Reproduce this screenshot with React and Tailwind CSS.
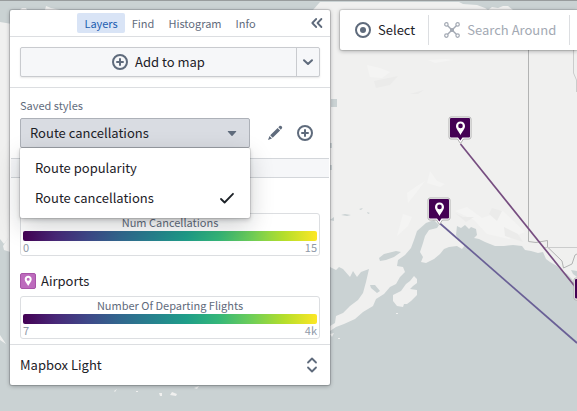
import { useState } from 'react'

const savedStyles = ['Route popularity', 'Route cancellations']
const tabs = ['Layers', 'Find', 'Histogram', 'Info']

const airports = [
  { x: 460, y: 128 },
  { x: 439, y: 209 },
  { x: 585, y: 289 },
]

function AddIcon() {
  return (
    <svg width="16" height="16" viewBox="0 0 16 16" fill="none" stroke="#5f6b7c" strokeWidth="2" aria-hidden="true">
      <circle cx="8" cy="8" r="7" />
      <path d="M8 5v6M5 8h6" strokeLinecap="round" />
    </svg>
  )
}

function CollapseIcon() {
  return (
    <svg width="16" height="16" viewBox="0 0 16 16" fill="none" stroke="#5f6b7c" strokeWidth="1.8" strokeLinecap="round" strokeLinejoin="round" aria-hidden="true">
      <path d="M7.2 4 3.3 8l3.9 4M12.4 4 8.5 8l3.9 4" />
    </svg>
  )
}

function ChevronDownIcon() {
  return (
    <svg width="16" height="16" viewBox="0 0 16 16" fill="none" stroke="#5f6b7c" strokeWidth="2" strokeLinecap="round" strokeLinejoin="round" aria-hidden="true">
      <path d="m4 6.2 4 3.8 4-3.8" />
    </svg>
  )
}

function CaretDownIcon() {
  return (
    <svg width="16" height="16" viewBox="0 0 16 16" fill="#5f6b7c" aria-hidden="true">
      <path d="M4.3 5.9h7.4c.5 0 .7.5.4.9l-3.6 3.9c-.3.3-.7.3-1 0L3.9 6.8c-.3-.4-.1-.9.4-.9Z" />
    </svg>
  )
}

function EditIcon() {
  return (
    <svg width="16" height="16" viewBox="0 0 16 16" fill="#5f6b7c" aria-hidden="true">
      <path d="M3.2 10.2 10.6 2.9l2.500 2.500-7.400 7.300ZM11.300 2.200l1-1c.3-.3.7-.4 1-.4 1 0 1.900.9 1.900 1.800 0 .4-.1.7-.4 1l-1 1.100ZM1 15l1.500-4 2.500 2.500Z" />
    </svg>
  )
}

function TickIcon() {
  return (
    <svg width="16" height="16" viewBox="0 0 16 16" fill="none" stroke="#1c2127" strokeWidth="1.8" strokeLinecap="round" strokeLinejoin="round" aria-hidden="true">
      <path d="m2 9 3.600 3.500L14 3.800" />
    </svg>
  )
}

function ExpandIcon() {
  return (
    <svg width="16" height="16" viewBox="0 0 16 16" fill="none" stroke="#5f6b7c" strokeWidth="1.8" strokeLinecap="round" strokeLinejoin="round" aria-hidden="true">
      <path d="m4 5.500 4-4 4 4M4 10.500l4 4 4-4" />
    </svg>
  )
}

function SelectIcon() {
  return (
    <svg width="16" height="16" viewBox="0 0 16 16" fill="none" aria-hidden="true">
      <circle cx="8" cy="8" r="7" stroke="#5f6b7c" strokeWidth="2" />
      <circle cx="8" cy="8" r="3" fill="#5f6b7c" />
    </svg>
  )
}

function GraphIcon() {
  return (
    <svg width="16" height="16" viewBox="0 0 16 16" fill="none" stroke="#a3a9b3" strokeWidth="1.2" aria-hidden="true">
      <path d="m3.700 3.700 8.600 8.600M12.300 3.700l-8.600 8.600" strokeWidth="1.4" />
      <circle cx="8" cy="8" r="1.5" fill="#a3a9b3" />
      <circle cx="2.4" cy="2.4" r="1.7" />
      <circle cx="13.6" cy="2.4" r="1.7" />
      <circle cx="2.4" cy="13.6" r="1.7" />
      <circle cx="13.6" cy="13.6" r="1.7" />
    </svg>
  )
}

function AirportIcon() {
  return (
    <svg width="16" height="16" viewBox="0 0 16 16" aria-hidden="true">
      <rect x="0.5" y="0.5" width="15" height="15" rx="1.5" fill="#bd6bbd" stroke="#a854a8" />
      <path fillRule="evenodd" fill="#fff" d="M8.200 2.800c-2 0-3.500 1.500-3.500 3.500 0 2.300 2.300 4.200 3.500 6.700 1.200-2.500 3.500-4.400 3.500-6.700 0-2-1.500-3.500-3.500-3.500Zm0 1.900a1.500 1.500 0 1 1 0 3 1.500 1.500 0 0 1 0-3Z" />
    </svg>
  )
}

function MapPin({ x, y }) {
  return (
    <g transform={`translate(${x} ${y})`}>
      <path d="M-9-11H9q2 0 2 2V9q0 2-2 2H3.500L.5 15.500-2.500 11H-9q-2 0-2-2V-9q0-2 2-2Z" fill="#fff" stroke="#a9a9a9" strokeWidth="0.9" />
      <path d="M-9-10H9q1 0 1 1V8.500q0 1-1 1H2.500L.3 12.500-2 9.500H-9q-1 0-1-1V-9q0-1 1-1Z" fill="#440154" />
      <path fillRule="evenodd" fill="#fff" d="M.5-6.500C-2.100-6.500-4-4.600-4-2.100-4 1-1 3.500.5 7 2 3.500 5 1 5-2.100 5-4.600 3.100-6.500.5-6.500Zm0 2.100a2.300 2.300 0 1 1 0 4.600 2.300 2.300 0 0 1 0-4.600Z" />
    </g>
  )
}

function MapCanvas() {
  return (
    <svg className="absolute inset-0 h-full w-full" viewBox="0 0 577 411" preserveAspectRatio="xMinYMin slice" aria-hidden="true">
      <rect width="577" height="411" fill="#cad2d3" />

      {/* mainland */}
      <path
        fill="#f0f0ef"
        d="M0 22 6 23 12 24 60 40 250 40 300 28 313 10 320 2 459 2 463 4 477 5 485 8 488 10 492 7 498 8 503 6 508 6 513 10 577 30V288L572 279 567 274 562 271 557 266 550 262 546 259 543 252 538 253 531 251 525 250 522 246 513 245 504 246 495 246 490 244 485 242 479 239 474 238 477 235 476 229 471 227 469 229 465 225 461 228 457 226 456 235 459 240 465 245 462 249 457 246 449 247 444 249 440 254 434 259 426 263 421 262 423 257 420 252 423 243 425 236 429 230 437 228 439 225 434 220 426 223 417 231 414 240 411 248 405 255 398 260 397 266 403 267 405 272 400 277 396 284 390 287 384 294 376 299 373 306 363 312 355 319 344 324 336 327 330 331 330 326 335 323 336 316 343 313 350 306 358 300 363 293 366 282 369 269 361 272 357 277 353 271 350 277 343 269 339 267 336 270 330 267 200 250 20 255 4 250 3 246 9 237 4 244 0 239Z"
      />

      {/* faint relief */}
      <g fill="#f4f4f3">
        <path d="M367 65 380 68 390 72 382 78 370 77ZM428 60 446 59 453 60 435 63ZM430 171 437 181 445 184 440 187 427 183ZM407 193 417 186 425 181 416 193 408 203ZM403 214 412 217 408 226 397 236ZM455 211 467 207 482 218 503 211 525 232 509 239 487 234 474 220Z" />
      </g>
      <g fill="#ebebea">
        <path d="M374 81 398 76 390 85 376 88ZM410 94 424 90 418 94ZM492 208 502 211 497 221 489 214ZM455 213 463 217 474 217 466 222ZM504 227 518 234 523 242 505 236Z" />
      </g>

      {/* islands and shoals */}
      <g fill="#f0f0ef">
        <path d="M393 295 401 291 406 284 410 281 414 276 417 279 417 283 413 286 410 289 417 290 417 295 411 301 407 304 404 304 403 307 397 306 393 301Z" />
        <path d="M330 334 334 333 332 337ZM338 338h2v1h-2ZM396 313h2v1h-2ZM20 10 22 8 26 8 27 10ZM45 10 46 6 51 8 60 10ZM0 335 6 344 0 340ZM114 391 117 389 115 392ZM159 393h3v3h-2ZM170 395 172 392 177 394 176 396ZM194 388 199 386 197 389ZM136 391h2v1h-2Z" />
      </g>

      {/* lakes and inlets */}
      <g fill="#cad2d3">
        <path d="M379 258 384 254 396 251 401 252 394 257 386 260 380 261ZM370 285 375 285 380 291 377 293 371 288ZM331 99h6v8h-6ZM330 220 334 217 334 221ZM341 215 345 214 351 215 347 216ZM359 209 363 208 361 210ZM367 212 370 213 368 214ZM330 143h2v5h-2ZM330 165h2v5h-2ZM571 270 577 271V277L573 274Z" />
      </g>

      <g fill="none" stroke="#b2b3b3">
        <path d="M528.500 48V241.500L536 242.500 547.500 240.500V247L562 261 563.500 268 572 264 575 255 577 254" />
        <path d="M544 247.500H577M573.500 50V73L576.500 80V92" stroke="#cbcccc" />
      </g>

      <path d="M460.500 144 577 289" stroke="#764d80" strokeWidth="1.7" />
      <path d="M439.500 223 577 343" stroke="#6a6096" strokeWidth="1.7" />
      {airports.map((airport) => (
        <MapPin key={airport.y} x={airport.x} y={airport.y} />
      ))}
    </svg>
  )
}

function Legend({ title, min, max }) {
  return (
    <div className="rounded-[3px] border border-[#dcdee1] px-[2px] text-[11px] leading-[14px]">
      <div className="pt-px pb-[2px] text-center text-[#5f6b7c]">{title}</div>
      <div className="h-[10px] rounded-[2px] bg-[linear-gradient(90deg,#440154,#482878,#3e4989,#31688e,#26828e,#1f9e89,#35b779,#6ece58,#b5de2b,#fde725)]" />
      <div className="-mt-px flex justify-between pb-px text-[#8f99a8]">
        <span>{min}</span>
        <span>{max}</span>
      </div>
    </div>
  )
}

function StylePicker() {
  const [open, setOpen] = useState(true)
  const [selected, setSelected] = useState('Route cancellations')

  function choose(style) {
    setSelected(style)
    setOpen(false)
  }

  return (
    <div className="relative w-[230px]">
      <button
        type="button"
        aria-labelledby="saved-styles-label saved-styles-value"
        aria-haspopup="listbox"
        aria-expanded={open}
        onClick={() => setOpen(!open)}
        className="flex h-[30px] w-full items-center justify-between rounded-[2px] border border-[#adb1b8] bg-[#d9dce2] px-[9px]"
      >
        <span id="saved-styles-value">{selected}</span>
        <CaretDownIcon />
      </button>
      {open && (
        <ul role="listbox" aria-labelledby="saved-styles-label" className="absolute top-full left-0 z-10 w-full rounded-[2px] bg-white p-[5px] shadow-[0_0_0_1px_rgba(17,20,24,0.1),0_2px_4px_rgba(17,20,24,0.2),0_8px_24px_rgba(17,20,24,0.2)]">
          {savedStyles.map((style) => (
            <li key={style} role="option" aria-selected={style === selected}>
              <button type="button" onClick={() => choose(style)} className="flex h-[30px] w-full items-center justify-between px-[10px]">
                {style}
                {style === selected && <TickIcon />}
              </button>
            </li>
          ))}
        </ul>
      )}
    </div>
  )
}

function LayersPanel() {
  const [tab, setTab] = useState('Layers')

  return (
    <aside className="w-[320px] shrink-0 self-start rounded-[2px] bg-white shadow-[0_0_0_1px_rgba(17,20,24,0.15),0_1px_4px_rgba(17,20,24,0.35)]">
      <nav className="relative flex h-[27px] items-center justify-center border-b border-[#dcdee1] text-[11px] leading-5">
        {tabs.map((name) => (
          <button
            key={name}
            type="button"
            onClick={() => setTab(name)}
            className={name === tab ? 'h-5 rounded-[2px] bg-[#d9e4f6] px-[7px] text-[#215db0]' : 'h-5 px-[7px] text-[#5f6b7c]'}
          >
            {name}
          </button>
        ))}
        <button type="button" aria-label="Collapse panel" className="absolute right-[5px]">
          <CollapseIcon />
        </button>
      </nav>

      <div className="border-b border-[#dcdee1] p-[10px]">
        <div className="flex h-[30px] rounded-[2px] border border-[#c9cbcf] bg-[#f6f7f9] shadow-[0_1px_2px_rgba(17,20,24,0.1)]">
          <button type="button" className="flex flex-1 items-center justify-center gap-[7px]">
            <AddIcon />
            Add to map
          </button>
          <button type="button" aria-label="More ways to add" className="flex w-[23px] items-center justify-center border-l border-[#c9cbcf]">
            <ChevronDownIcon />
          </button>
        </div>
      </div>

      <div className="px-[10px] pt-2 pb-[10px]">
        <div id="saved-styles-label" className="pb-1 text-[11px] leading-[18px] text-[#5f6b7c]">Saved styles</div>
        <div className="flex items-center">
          <StylePicker />
          <button type="button" aria-label="Edit style" className="ml-[10px] flex h-[30px] w-[30px] items-center justify-center">
            <EditIcon />
          </button>
          <button type="button" aria-label="Add style" className="flex h-[30px] w-[30px] items-center justify-center">
            <AddIcon />
          </button>
        </div>
      </div>

      <div className="mx-px h-5 border-y border-[#d3d6da] bg-[#f6f7f9]" />

      <div className="px-[10px] pt-[35px] pb-[5px]">
        <Legend title="Num Cancellations" min="0" max="15" />
        <div className="flex items-center gap-[5px] pt-[15px] pb-[5px] leading-5">
          <AirportIcon />
          Airports
        </div>
        <Legend title="Number Of Departing Flights" min="7" max="4k" />
      </div>

      <button type="button" className="flex h-[41px] w-full items-center justify-between border-t border-[#dcdee1] px-[10px]">
        Mapbox Light
        <ExpandIcon />
      </button>
    </aside>
  )
}

function Toolbar() {
  return (
    <div className="-mr-[10px] flex h-10 min-w-0 flex-1 items-center self-start overflow-hidden rounded-l-[2px] bg-white whitespace-nowrap shadow-[0_0_0_1px_rgba(17,20,24,0.1),0_1px_4px_rgba(17,20,24,0.35)]">
      <button type="button" className="flex h-[30px] shrink-0 items-center gap-[7px] border-r border-[#dcdee1] pr-[13px] pl-[15px]">
        <SelectIcon />
        Select
      </button>
      <button type="button" disabled className="flex h-[30px] shrink-0 items-center gap-[7px] border-r border-[#dcdee1] pr-[13px] pl-[15px] text-[#a3a9b3]">
        <GraphIcon />
        Search Around
      </button>
    </div>
  )
}

export default function App() {
  return (
    <main className="relative min-h-screen overflow-hidden bg-[#cad2d3] font-['Noto_Sans_CJK_SC','Noto_Sans',sans-serif] text-[13px] leading-5 text-[#1c2127]">
      <MapCanvas />
      <div className="relative flex gap-[10px] border-t border-[#989c9d] px-[10px] pt-[9px] pb-[10px]">
        <LayersPanel />
        <Toolbar />
      </div>
    </main>
  )
}
